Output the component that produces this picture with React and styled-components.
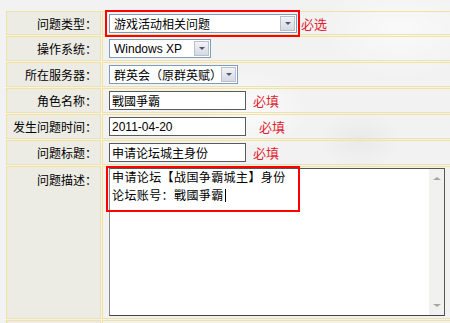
import React from 'react'
import styled, { createGlobalStyle } from 'styled-components'

const GlobalStyle = createGlobalStyle`
  html, body { margin:0; padding:0; }
  body {
    width:450px;
    height:323px;
    overflow:hidden;
    background:#f2f2f2;
    font-family:"Liberation Sans","Noto Sans CJK SC",sans-serif;
  }
`

const Page = styled.div`
  height:323px;
  overflow:hidden;
  box-sizing:border-box;
  padding:10px 0 0 5px;
  background:
    radial-gradient(ellipse 60px 40px at 250px 110px, rgba(255,255,255,0.7), transparent),
    radial-gradient(ellipse 80px 50px at 400px 30px, rgba(255,255,255,0.6), transparent),
    radial-gradient(ellipse 40px 30px at 360px 140px, rgba(225,225,225,0.5), transparent),
    #f2f2f2;
`

const FormTable = styled.table`
  border-collapse:separate;
  border-spacing:1px;
  width:448px;
  font-size:12px;
  color:#000;
`

const LabelCell = styled.td`
  width:90px;
  height:${p => p.$h || 23}px;
  padding:${p => (p.$top ? '4px 3px 0 0' : '0 3px 0 0')};
  border:1px solid #efe2a2;
  background:#ecebe4;
  text-align:right;
  vertical-align:${p => (p.$top ? 'top' : 'middle')};
  white-space:nowrap;
  font-family:"Noto Sans CJK SC",sans-serif;
`

const ValueCell = styled.td`
  padding:${p => (p.$top ? '1px 0 0 6px' : '0 0 0 6px')};
  border:1px solid #efe2a2;
  border-right:none;
  vertical-align:${p => (p.$top ? 'top' : 'middle')};
  white-space:nowrap;
`

const Field = styled.div`
  display:flex;
  align-items:center;
`

const Highlight = styled.span`
  position:relative;
  display:inline-flex;
  &::after {
    content:'';
    position:absolute;
    inset:-4px -3px -4px -4px;
    border:2px solid #f00;
    pointer-events:none;
  }
`

const Select = styled.div`
  display:inline-flex;
  align-items:center;
  box-sizing:border-box;
  width:${p => p.$w}px;
  height:19px;
  border:1px solid #7f9db9;
  background:#fff;
`

const SelectText = styled.span`
  flex:1;
  padding-left:4px;
  font-size:12px;
  font-family:${p => (p.$latin ? '"Liberation Sans",sans-serif' : '"Noto Sans CJK SC",sans-serif')};
  overflow:hidden;
  white-space:nowrap;
`

const DropButton = styled.span`
  box-sizing:border-box;
  width:15px;
  height:15px;
  margin-right:1px;
  border:1px solid #b8c0cc;
  background:linear-gradient(#f2f3f6, #d5d9e2);
  display:flex;
  align-items:center;
  justify-content:center;
  &::before {
    content:'';
    border-left:3px solid transparent;
    border-right:3px solid transparent;
    border-top:3px solid #4a5872;
  }
`

const TextInput = styled.input`
  box-sizing:border-box;
  width:137px;
  height:19px;
  margin:0;
  padding:0 2px;
  border:1px solid #5a5a5a;
  background:#fff;
  font-size:12px;
  font-family:"Liberation Sans","Noto Sans CJK SC",sans-serif;
  color:#000;
  outline:none;
`

const Required = styled.span`
  margin-left:${p => p.$gap || 7}px;
  color:#e01c30;
  font-size:13px;
  font-family:"Noto Sans CJK SC",sans-serif;
`

const TextBox = styled.div`
  position:relative;
  display:flex;
  box-sizing:border-box;
  width:336px;
  height:148px;
  border:1px solid;
  border-color:#555 #555 #444 #8a8a8a;
  background:#fff;
`

const TextContent = styled.div`
  flex:1;
  padding:0 2px;
  margin-top:-1px;
  line-height:18px;
  font-size:12px;
  letter-spacing:0.4px;
  font-family:"Noto Sans CJK SC",sans-serif;
`

const Caret = styled.span`
  display:inline-block;
  width:1px;
  height:13px;
  margin-left:1px;
  background:#000;
  vertical-align:-2px;
`

const ScrollBar = styled.div`
  width:15px;
  background:#f1f1ef;
  display:flex;
  flex-direction:column;
  justify-content:space-between;
  align-items:center;
  padding:8px 0;
`

const Arrow = styled.span`
  border-left:4px solid transparent;
  border-right:4px solid transparent;
  ${p => (p.$up ? 'border-bottom:3px solid #a5a5a5;' : 'border-top:3px solid #a5a5a5;')}
`

const TextHighlight = styled.div`
  position:absolute;
  left:-4px;
  top:-3px;
  width:194px;
  height:46px;
  box-sizing:border-box;
  border:2px solid #f00;
  pointer-events:none;
`

const rows = [
  { label: '角色名称：', value: '戰國爭霸', gap: 7 },
  { label: '发生问题时间：', value: '2011-04-20', gap: 13 },
  { label: '问题标题：', value: '申请论坛城主身份', gap: 7 },
]

export default function App() {
  return (
    <Page>
      <GlobalStyle />
      <FormTable>
        <tbody>
          <tr>
            <LabelCell $h={22}>问题类型：</LabelCell>
            <ValueCell>
              <Field>
                <Highlight>
                  <Select $w={188}>
                    <SelectText>游戏活动相关问题</SelectText>
                    <DropButton />
                  </Select>
                </Highlight>
                <Required $gap={4}>必选</Required>
              </Field>
            </ValueCell>
          </tr>
          <tr>
            <LabelCell>操作系统：</LabelCell>
            <ValueCell>
              <Field>
                <Select $w={102}>
                  <SelectText $latin>Windows XP</SelectText>
                  <DropButton />
                </Select>
              </Field>
            </ValueCell>
          </tr>
          <tr>
            <LabelCell>所在服务器：</LabelCell>
            <ValueCell>
              <Field>
                <Select $w={129}>
                  <SelectText>群英会（原群英赋）</SelectText>
                  <DropButton />
                </Select>
              </Field>
            </ValueCell>
          </tr>
          {rows.map(r => (
            <tr key={r.label}>
              <LabelCell>{r.label}</LabelCell>
              <ValueCell>
                <Field>
                  <TextInput readOnly value={r.value} />
                  <Required $gap={r.gap}>必填</Required>
                </Field>
              </ValueCell>
            </tr>
          ))}
          <tr>
            <LabelCell $h={147} $top>问题描述：</LabelCell>
            <ValueCell $top>
              <TextBox>
                <TextContent>
                  申请论坛【战国争霸城主】身份
                  <br />
                  论坛账号：戰國爭霸<Caret />
                </TextContent>
                <ScrollBar>
                  <Arrow $up />
                  <Arrow />
                </ScrollBar>
                <TextHighlight />
              </TextBox>
            </ValueCell>
          </tr>
          <tr>
            <LabelCell />
            <ValueCell />
          </tr>
        </tbody>
      </FormTable>
    </Page>
  )
}
